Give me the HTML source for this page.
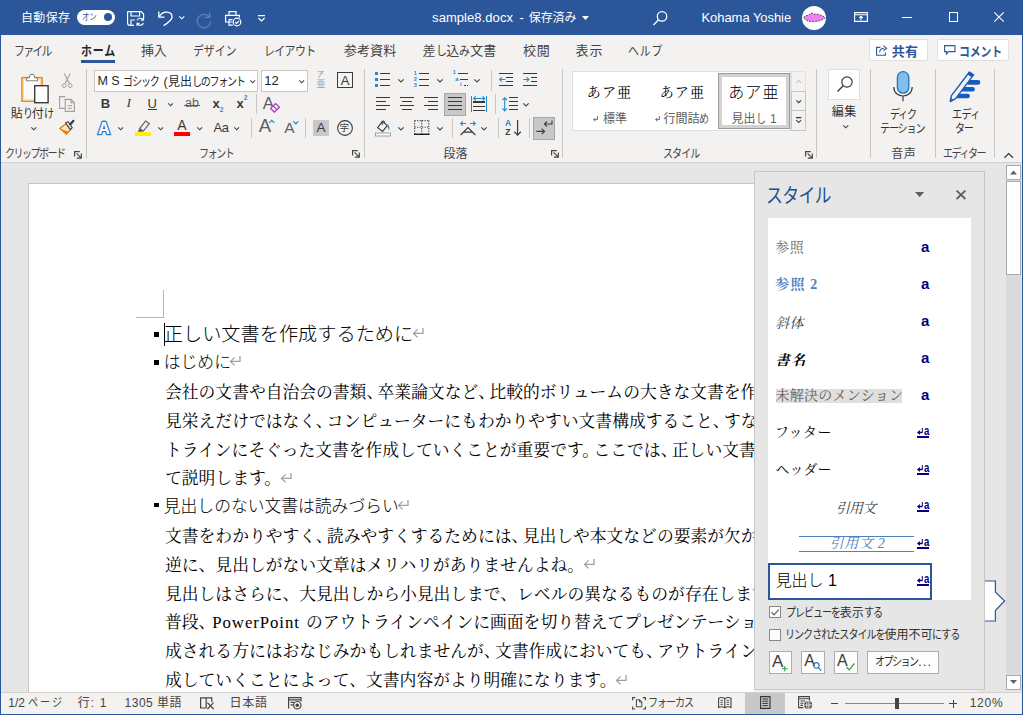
<!DOCTYPE html>
<html lang="ja">
<head>
<meta charset="utf-8">
<title>sample8.docx - Word</title>
<style>
*{box-sizing:border-box;margin:0;padding:0}
html,body{width:1023px;height:715px;overflow:hidden;background:#e6e6e6}
body{position:relative;font-family:"Liberation Sans","Noto Sans CJK JP",sans-serif;font-size:12px;color:#444}
.abs{position:absolute}
.t{position:absolute;white-space:pre;line-height:1;color:#444}
svg{position:absolute;overflow:visible}
.clip{position:absolute;overflow:hidden}
.bd{position:absolute;left:165px;height:28.8px;line-height:28.8px;white-space:pre;color:#000;font-size:16.8px;font-family:'Liberation Serif','Noto Serif CJK JP','Noto Serif CJK SC',serif}
.hd{position:absolute;left:163.8px;height:28.8px;line-height:28.8px;white-space:pre;color:#000;font-weight:300;font-family:'Liberation Sans','Noto Sans CJK JP','IPAGothic',sans-serif}
.lat{display:inline-block;width:93.7px;letter-spacing:0.92px}
.pmb{margin-left:-2.6px;margin-bottom:5px}
.pm{position:static;display:inline-block;vertical-align:middle;margin-left:-0.5px;margin-bottom:5px}
.k{display:inline-block;transform-origin:0 50%}
</style>
</head>
<body>
<div class="abs" style="left:0px;top:0px;width:1023px;height:35px;background:#2b579a;"></div>
<div class="abs" style="left:1px;top:35px;width:1021px;height:127px;background:#f3f2f1;"></div>
<div class="abs" style="left:1px;top:162px;width:1021px;height:1px;background:#d0d0d0;"></div>
<div class="abs" style="left:1px;top:163px;width:1021px;height:529px;background:#e6e6e6;"></div>
<div class="abs" style="left:0px;top:35px;width:1px;height:680px;background:#2b579a;"></div>
<div class="abs" style="left:1022px;top:35px;width:1px;height:680px;background:#2b579a;"></div>
<div class="abs" style="left:0px;top:714px;width:1023px;height:1px;background:#2b579a;"></div>
<div class="abs" style="left:28px;top:183px;width:760px;height:520px;background:#fff;border:1px solid #c6c6c6;"></div>
<div class="abs" style="left:163px;top:290px;width:1px;height:28px;background:#b5b5b5;"></div>
<div class="abs" style="left:136px;top:317px;width:28px;height:1px;background:#b5b5b5;"></div>
<div class="clip" style="left:29px;top:184px;width:725px;height:508px">
<div class="abs" style="left:-29px;top:-184px;width:1023px;height:715px">
<div class="abs" style="left:154.2px;top:331.8px;width:4.8px;height:4.8px;background:#000;"></div>
<div class="hd" style="top:320.8px;font-size:19.2px">正しい文書を作成するために<svg class="pm" width="11" height="10" viewBox="0 0 11 10"><path d="M10 0 V5.4 H0.6 M4.6 1.4 L0.5 5.4 L4.6 9.4" fill="none" stroke="#a0a0a0" stroke-width="1.3"/></svg></div>
<div class="abs" style="left:154.2px;top:360px;width:4.8px;height:4.8px;background:#000;"></div>
<div class="hd" style="top:348.8px;font-size:16.8px">はじめに<svg class="pm" width="11" height="10" viewBox="0 0 11 10"><path d="M10 0 V5.4 H0.6 M4.6 1.4 L0.5 5.4 L4.6 9.4" fill="none" stroke="#a0a0a0" stroke-width="1.3"/></svg></div>
<div class="bd" style="top:379px">会社の文書や自治会の書類<span style="margin-right:-5.65px">、</span>卒業論文など<span style="margin-right:-5.65px">、</span>比較的ボリュームの大きな文書を作成する場合は<span style="margin-right:-5.65px">、</span></div>
<div class="bd" style="top:407.8px">見栄えだけではなく<span style="margin-right:-5.65px">、</span>コンピューターにもわかりやすい文書構成すること<span style="margin-right:-5.65px">、</span>すなわちアウ</div>
<div class="bd" style="top:436.6px">トラインにそぐった文書を作成していくことが重要です<span style="margin-right:-5.65px">。</span>ここでは<span style="margin-right:-5.65px">、</span>正しい文書構造につい</div>
<div class="bd" style="top:465.4px">て説明します。<svg class="pm pmb" width="11" height="10" viewBox="0 0 11 10"><path d="M10 0 V5.4 H0.6 M4.6 1.4 L0.5 5.4 L4.6 9.4" fill="none" stroke="#a0a0a0" stroke-width="1.3"/></svg></div>
<div class="abs" style="left:154.2px;top:502.7px;width:4.8px;height:4.8px;background:#000;"></div>
<div class="hd" style="top:492.8px;font-size:16.8px">見出しのない文書は読みづらい<svg class="pm" width="11" height="10" viewBox="0 0 11 10"><path d="M10 0 V5.4 H0.6 M4.6 1.4 L0.5 5.4 L4.6 9.4" fill="none" stroke="#a0a0a0" stroke-width="1.3"/></svg></div>
<div class="bd" style="top:523px">文書をわかりやすく<span style="margin-right:-5.65px">、</span>読みやすくするためには<span style="margin-right:-5.65px">、</span>見出しや本文などの要素が欠かせません<span style="margin-right:-5.65px">。</span></div>
<div class="bd" style="top:551.8px">逆に、見出しがない文章はメリハリがありませんよね。<svg class="pm pmb" width="11" height="10" viewBox="0 0 11 10"><path d="M10 0 V5.4 H0.6 M4.6 1.4 L0.5 5.4 L4.6 9.4" fill="none" stroke="#a0a0a0" stroke-width="1.3"/></svg></div>
<div class="bd" style="top:580.6px">見出しはさらに、大見出しから小見出しまで、レベルの異なるものが存在します。</div>
<div class="bd" style="top:609.4px">普段<span style="margin-right:-3.1px">、</span><span class="lat">PowerPoint </span>のアウトラインペインに画面を切り替えてプレゼンテーションを作</div>
<div class="bd" style="top:638.2px">成される方にはおなじみかもしれませんが<span style="margin-right:-5.65px">、</span>文書作成においても<span style="margin-right:-5.65px">、</span>アウトラインを作</div>
<div class="bd" style="top:667px">成していくことによって、文書内容がより明確になります。<svg class="pm pmb" width="11" height="10" viewBox="0 0 11 10"><path d="M10 0 V5.4 H0.6 M4.6 1.4 L0.5 5.4 L4.6 9.4" fill="none" stroke="#a0a0a0" stroke-width="1.3"/></svg></div>
</div></div>
<div class="abs" style="left:164.4px;top:323px;width:1px;height:22.6px;background:#000;"></div>
<div class="t" id="t1" style="left:21px;top:11.5px;font-size:12px;color:#fff;letter-spacing:0.33px;">自動保存</div>
<div class="abs" style="left:77px;top:10px;width:38px;height:14.5px;background:#fff;border-radius:7.5px;"></div>
<div class="t" id="t2" style="left:82.25px;top:12.8px;font-size:9px;color:#2b579a;"><span class="k" style="margin-right:-2.78px;transform:scaleX(0.84);letter-spacing:-0.3px;">オン</span></div>
<div class="abs" style="left:104px;top:13.1px;width:8px;height:8px;background:#2b579a;border-radius:4px;"></div>
<svg style="left:127px;top:11px" width="18" height="15" viewBox="0 0 18 15"><path d="M0.6 0.6 H14.2 L16.6 3 V8 M0.6 0.6 V12 Q0.6 14.4 3 14.4 H7 M4 0.6 V5 H12.6 V0.6 M4 14 V9 H8" fill="none" stroke="#fff" stroke-width="1.2"/><path d="M10 9.4 A3.4 3.4 0 0 1 16.2 9 M16.4 6.6 V9.2 H13.8 M16.4 12 A3.4 3.4 0 0 1 10.2 12.6 M10 15 V12.4 H12.6" fill="none" stroke="#fff" stroke-width="1.1"/></svg>
<svg style="left:158px;top:11px" width="15" height="15" viewBox="0 0 15 15"><path d="M0.8 0.6 V6.2 H6.4 M1 6 C3 2.4 6.4 0.9 9.4 1.2 C12.6 1.6 14.2 4 14 6.4 C13.8 9.4 10.4 11.6 5.6 14.6" fill="none" stroke="#fff" stroke-width="1.3"/></svg>
<svg style="left:179px;top:16px" width="5.6" height="3.8" viewBox="0 0 5.6 3.8"><path d="M0.3 0.3 L2.8 2.8 L5.3 0.3" fill="none" stroke="#fff" stroke-width="1.1"/></svg>
<svg style="left:196px;top:11.6px" width="16" height="15" viewBox="0 0 16 15"><path d="M13.6 0.4 V5.4 H8.6 M13.2 5 A6.7 6.7 0 1 0 14.6 9.6" fill="none" stroke="#5b7fb8" stroke-width="1.3"/></svg>
<svg style="left:225px;top:11px" width="17" height="15" viewBox="0 0 17 15"><path d="M4 4.4 V0.6 H11 V4.4 M7.4 11 H0.6 V4.4 H14.4 V6.6 M4 8.6 H7.6 M4 8.6 V14.2 H7.8" fill="none" stroke="#fff" stroke-width="1.2"/><circle cx="12" cy="11" r="3.8" fill="none" stroke="#fff" stroke-width="1.2"/><path d="M10.2 11 L11.6 12.4 L14 9.8" fill="none" stroke="#fff" stroke-width="1.1"/></svg>
<svg style="left:258px;top:14.6px" width="7" height="6.4" viewBox="0 0 7 6.4"><path d="M0 0.6 H7 M0.4 3 L3.5 6 L6.6 3" fill="none" stroke="#fff" stroke-width="1.2"/></svg>
<div class="t" id="t3" style="left:432.1px;top:11px;font-size:13px;color:#fff;letter-spacing:0.06px;">sample8.docx</div>
<div class="t" id="t4" style="left:519.5px;top:11px;font-size:13px;color:#fff;">-</div>
<div class="t" id="t5" style="left:528.75px;top:11.6px;font-size:12px;color:#fff;letter-spacing:-0.07px;">保存済み</div>
<svg style="left:581.5px;top:15.8px" width="7" height="4" viewBox="0 0 7 4"><path d="M0 0 H7 L3.5 4 Z" fill="#fff"/></svg>
<svg style="left:653px;top:11px" width="14.5" height="14.5" viewBox="0 0 14.5 14.5"><circle cx="9" cy="5.4" r="4.7" fill="none" stroke="#fff" stroke-width="1.3"/><path d="M5.6 8.8 L0.5 14" stroke="#fff" stroke-width="1.3"/></svg>
<div class="t" id="t6" style="left:701.5px;top:11px;font-size:13px;color:#fff;letter-spacing:-0.06px;">Kohama Yoshie</div>
<div class="abs" style="left:802px;top:6px;width:24px;height:24px;background:#fff;border-radius:12px;"></div>
<svg style="left:803px;top:12.4px" width="23" height="11" viewBox="0 0 23 11"><path d="M0.6 5.6 C2 3.4 4.4 3.6 6 3 C7 0.8 9.4 0.8 10.4 2.2 C13.6 1.6 18.4 2.6 22.2 5.8 C19 8.4 15 9.6 10.6 9.4 C6.6 9.8 2.4 8.8 0.6 5.6 Z" fill="#ee82ee" stroke="#111" stroke-width="0.7" stroke-dasharray="1.8 1.2"/></svg>
<svg style="left:854px;top:12px" width="14" height="10" viewBox="0 0 14 10"><path d="M0.6 0.6 H13.4 V9.4 H0.6 Z M0.6 2.8 H13.4" fill="none" stroke="#fff" stroke-width="1.1"/><path d="M7 8.2 V4.4 M5.2 6 L7 4.2 L8.8 6" fill="none" stroke="#fff" stroke-width="1.1"/></svg>
<div class="abs" style="left:902px;top:16.6px;width:10px;height:1.1px;background:#fff;"></div>
<div class="abs" style="left:948.6px;top:12.4px;width:9.8px;height:9.8px;border:1.1px solid #fff;"></div>
<svg style="left:994px;top:12px" width="10" height="10" viewBox="0 0 10 10"><path d="M0.3 0.3 L9.7 9.7 M9.7 0.3 L0.3 9.7" stroke="#fff" stroke-width="1.1"/></svg>
<div class="t" id="t7" style="left:13.5px;top:43.5px;font-size:13px;"><span class="k" style="margin-right:-6.99px;transform:scaleX(0.84);letter-spacing:-2.08px;">ファイル</span></div>
<div class="t" id="t8" style="left:81px;top:43.5px;font-size:13px;color:#262626;font-weight:700;"><span class="k" style="margin-right:-6.74px;transform:scaleX(0.84);letter-spacing:1.04px;">ホーム</span></div>
<div class="abs" style="left:81px;top:60px;width:34px;height:3px;background:#2b579a;"></div>
<div class="t" id="t9" style="left:140.95px;top:43.5px;font-size:13px;letter-spacing:-0.25px;">挿入</div>
<div class="t" id="t10" style="left:193.4px;top:43.5px;font-size:13px;"><span class="k" style="margin-right:-8.26px;transform:scaleX(0.84);letter-spacing:-0.1px;">デザイン</span></div>
<div class="t" id="t11" style="left:263.5px;top:43.5px;font-size:13px;"><span class="k" style="margin-right:-9.81px;transform:scaleX(0.84);letter-spacing:-0.74px;">レイアウト</span></div>
<div class="t" id="t12" style="left:343.75px;top:43.5px;font-size:13px;letter-spacing:0.18px;">参考資料</div>
<div class="t" id="t13" style="left:422.5px;top:43.5px;font-size:13px;">差<span class="k" style="margin-right:-2.06px;transform:scaleX(0.84);letter-spacing:-0.15px;">し</span>込<span class="k" style="margin-right:-2.06px;transform:scaleX(0.84);letter-spacing:-0.15px;">み</span>文書</div>
<div class="t" id="t14" style="left:522.9px;top:43.5px;font-size:13px;letter-spacing:0.8px;">校閲</div>
<div class="t" id="t15" style="left:575.5px;top:43.5px;font-size:13px;letter-spacing:1.05px;">表示</div>
<div class="t" id="t16" style="left:627.65px;top:43.5px;font-size:13px;"><span class="k" style="margin-right:-6.68px;transform:scaleX(0.84);letter-spacing:0.92px;">ヘルプ</span></div>
<div class="abs" style="left:868.5px;top:38.6px;width:59px;height:22.6px;background:#fff;border:1px solid #e1dfdd;border-radius:2px;"></div>
<svg style="left:875.6px;top:45px" width="11.6" height="10.8" viewBox="0 0 11.6 10.8"><path d="M4.4 2.4 H0.6 V10.2 H9.4 V7.4" fill="none" stroke="#2b579a" stroke-width="1.1"/><path d="M3.6 7.4 C3.8 4.6 5.6 3.2 8 3.2 M7.4 0.6 L10.6 3.2 L7.4 5.8" fill="none" stroke="#2b579a" stroke-width="1.1"/></svg>
<div class="t" id="t17" style="left:891.8px;top:44.5px;font-size:13px;color:#2b579a;font-weight:700;letter-spacing:0.25px;">共有</div>
<div class="abs" style="left:936.6px;top:38.6px;width:72.7px;height:22.6px;background:#fff;border:1px solid #e1dfdd;border-radius:2px;"></div>
<svg style="left:944.4px;top:45.4px" width="11.6" height="9.6" viewBox="0 0 11.6 9.6"><path d="M0.6 0.6 H11 V6.6 H4.6 L2.4 9 V6.6 H0.6 Z" fill="none" stroke="#2b579a" stroke-width="1.1"/></svg>
<div class="t" id="t18" style="left:958.5px;top:44.5px;font-size:13px;color:#2b579a;font-weight:700;"><span class="k" style="margin-right:-8.18px;transform:scaleX(0.84);letter-spacing:-0.22px;">コメント</span></div>
<svg style="left:20.5px;top:72.6px" width="28" height="30.5" viewBox="0 0 28 30.5"><rect x="1" y="4.6" width="20" height="23.6" fill="#fbfaf8" stroke="#e48a00" stroke-width="1.5"/><rect x="2.4" y="6" width="17.2" height="20.8" fill="none" stroke="#fbdca8" stroke-width="1.2"/><path d="M5.4 7.8 V4.6 H8.4 C8.4 0.2 13.6 0.2 13.6 4.6 H16.6 V7.8 Z" fill="#fafafa" stroke="#8a8886" stroke-width="1.1"/><rect x="13.7" y="12.7" width="13.4" height="17" fill="#fff" stroke="#3b3a39" stroke-width="1.4"/></svg>
<div class="t" id="t19" style="left:10.7px;top:108.2px;font-size:12px;color:#323130;">貼<span class="k" style="margin-right:-1.72px;transform:scaleX(0.84);letter-spacing:-1.25px;">り</span>付<span class="k" style="margin-right:-1.72px;transform:scaleX(0.84);letter-spacing:-1.25px;">け</span></div>
<svg style="left:30.8px;top:127.2px" width="5.6" height="3.8" viewBox="0 0 5.6 3.8"><path d="M0.3 0.3 L2.8 2.8 L5.3 0.3" fill="none" stroke="#444" stroke-width="1.1"/></svg>
<svg style="left:62px;top:72.6px" width="10.4" height="15.2" viewBox="0 0 10.4 15.2"><path d="M2.2 0.4 L7.4 10.6 M8.2 0.4 L3 10.6" fill="none" stroke="#a19f9d" stroke-width="1.1"/><circle cx="2.2" cy="12.6" r="1.9" fill="none" stroke="#a19f9d" stroke-width="1"/><circle cx="8.2" cy="12.6" r="1.9" fill="none" stroke="#a19f9d" stroke-width="1"/></svg>
<svg style="left:59px;top:96px" width="16" height="16" viewBox="0 0 16 16"><path d="M6 12.4 H0.6 V0.6 H6.2" fill="none" stroke="#a19f9d" stroke-width="1.1"/><path d="M6.2 3.4 H12 L15.4 6.8 V15.4 H6.2 Z M12 3.4 V6.8 H15.4" fill="#f3f2f1" stroke="#a19f9d" stroke-width="1.1"/><path d="M8.6 9.6 H13 M8.6 12.2 H13" stroke="#a19f9d" stroke-width="1"/></svg>
<svg style="left:59.4px;top:120px" width="16" height="15" viewBox="0 0 16 15"><path d="M0.8 8.4 L7.2 3.6 L11.6 9.8 L7.4 14.2 Z" fill="#fbe3c0" stroke="#e07800" stroke-width="1.3"/><path d="M1.4 8.8 L7.6 14 L9.6 11.8 Z" fill="#e8820c"/><path d="M6.6 3 L9.2 1.6 L13.2 7.6 L11.4 9.6 Z" fill="#f3f2f1" stroke="#3b3a39" stroke-width="1.1"/><path d="M11.2 4.4 L14.4 0.8" stroke="#3b3a39" stroke-width="2.2" stroke-linecap="round"/></svg>
<div class="t" id="t20" style="left:5.3px;top:147.6px;font-size:12px;"><span class="k" style="margin-right:-11.32px;transform:scaleX(0.84);letter-spacing:-1.89px;">クリップボード</span></div>
<svg style="left:74px;top:150.5px" width="8" height="7.5" viewBox="0 0 8 7.5"><path d="M0.6 5.6 V0.6 H5.8" fill="none" stroke="#484644" stroke-width="1.2"/><path d="M2.6 2.4 L7 6.8 M7.3 2.6 V7.1 H2.8" fill="none" stroke="#484644" stroke-width="1.2"/></svg>
<div class="abs" style="left:85.5px;top:69.3px;width:1px;height:88.4px;background:#c8c6c4;"></div>
<div class="abs" style="left:94.4px;top:69.5px;width:164px;height:22px;background:#fff;border:1px solid #c8c6c4;"></div>
<div class="t" id="t21" style="left:97.6px;top:75.35px;font-size:12.5px;color:#262626;">M</div>
<div class="t" id="t22" style="left:111.15px;top:75.35px;font-size:12.5px;color:#262626;">S</div>
<div class="t" id="t23" style="left:123.2px;top:75.8px;font-size:12px;color:#262626;"><span class="k" style="margin-right:-6.82px;transform:scaleX(0.84);letter-spacing:-1.35px;">ゴシック</span></div>
<div class="t" id="t24" style="left:163.55px;top:75.55px;font-size:12.5px;color:#262626;">(</div>
<div class="t" id="t25" style="left:167.9px;top:75.8px;font-size:12px;color:#262626;">見出<span class="k" style="margin-right:-10px;transform:scaleX(0.84);letter-spacing:-1.58px;">しのフォント</span></div>
<svg style="left:250px;top:79.8px" width="5.4" height="3.8" viewBox="0 0 5.4 3.8"><path d="M0.3 0.3 L2.7 2.8 L5.1 0.3" fill="none" stroke="#444" stroke-width="1.1"/></svg>
<div class="abs" style="left:261.4px;top:69.5px;width:46.2px;height:22px;background:#fff;border:1px solid #c8c6c4;"></div>
<div class="t" id="t26" style="left:264.2px;top:74.4px;font-size:13px;color:#262626;">12</div>
<svg style="left:298.6px;top:79.8px" width="5.4" height="3.8" viewBox="0 0 5.4 3.8"><path d="M0.3 0.3 L2.7 2.8 L5.1 0.3" fill="none" stroke="#444" stroke-width="1.1"/></svg>
<div class="t" id="t27" style="left:316.85px;top:71.3px;font-size:8px;color:#8a8886;"><span class="k" style="margin-right:-1.28px;transform:scaleX(0.84);">ア</span></div>
<div class="t" id="t28" style="left:316.5px;top:79.5px;font-size:9px;color:#a19f9d;">亜</div>
<div class="abs" style="left:337px;top:72px;width:16px;height:16px;border:1.2px solid #3b3a39;"></div>
<div class="t" id="t29" style="left:340.7px;top:73.7px;font-size:13px;color:#3b3a39;">A</div>
<div class="t" id="t30" style="left:100.75px;top:96.7px;font-size:13px;color:#3b3a39;font-weight:700;">B</div>
<div class="t" id="t31" style="left:126.6px;top:96.45px;font-size:13.5px;color:#3b3a39;font-family:'Liberation Serif',serif;font-style:italic;">I</div>
<div class="t" id="t32" style="left:147.6px;top:96.7px;font-size:13px;color:#3b3a39;">U</div>
<div class="abs" style="left:148.2px;top:109px;width:9.2px;height:1px;background:#3b3a39;"></div>
<svg style="left:167.9px;top:103px" width="5.2" height="3.8" viewBox="0 0 5.2 3.8"><path d="M0.3 0.3 L2.6 2.8 L4.9 0.3" fill="none" stroke="#444" stroke-width="1.1"/></svg>
<div class="t" id="t33" style="left:185.1px;top:97.35px;font-size:12.5px;color:#605e5c;">ab</div>
<div class="abs" style="left:184.3px;top:104.6px;width:15.7px;height:1px;background:#605e5c;"></div>
<div class="t" id="t34" style="left:212.55px;top:96.9px;font-size:13px;color:#3b3a39;font-weight:700;">x</div>
<div class="t" id="t35" style="left:219.75px;top:106.55px;font-size:6.5px;color:#1e8bcd;font-weight:700;">2</div>
<div class="t" id="t36" style="left:236.45px;top:96.9px;font-size:13px;color:#3b3a39;font-weight:700;">x</div>
<div class="t" id="t37" style="left:243.75px;top:95.05px;font-size:6.5px;color:#1e8bcd;font-weight:700;">2</div>
<div class="abs" style="left:255.5px;top:94px;width:1px;height:20px;background:#c8c6c4;"></div>
<div class="t" id="t38" style="left:262.8px;top:95.1px;font-size:17px;color:#605e5c;">A</div>
<svg style="left:269.5px;top:102.5px" width="10" height="9.5" viewBox="0 0 10 9.5"><path d="M0.6 5.4 L5.6 0.6 L9.4 4.2 L4.4 9 Z M3.1 3 L6.9 6.6" fill="#fff" stroke="#a63fb5" stroke-width="1.3"/></svg>
<div class="t" id="t39" style="left:98.1px;top:119.55px;font-size:16.5px;color:#fff;font-weight:700;-webkit-text-stroke:2.6px #2b7cd3;paint-order:stroke fill;">A</div>
<svg style="left:117.8px;top:126.5px" width="5.4" height="3.8" viewBox="0 0 5.4 3.8"><path d="M0.3 0.3 L2.7 2.8 L5.1 0.3" fill="none" stroke="#444" stroke-width="1.1"/></svg>
<svg style="left:135px;top:120px" width="16" height="16" viewBox="0 0 16 16"><path d="M4.6 8.6 L10.6 1 L14.2 3.6 L8.4 11 Z" fill="none" stroke="#605e5c" stroke-width="1.2"/><path d="M4.4 8.8 L8.2 11.4 L5.6 12 L2.6 11.4 Z" fill="#605e5c"/><rect x="0" y="12.2" width="16" height="3.8" fill="#ffef00"/></svg>
<svg style="left:157.6px;top:126.5px" width="5.4" height="3.8" viewBox="0 0 5.4 3.8"><path d="M0.3 0.3 L2.7 2.8 L5.1 0.3" fill="none" stroke="#444" stroke-width="1.1"/></svg>
<div class="t" id="t40" style="left:177.2px;top:118.4px;font-size:14px;color:#3b3a39;">A</div>
<div class="abs" style="left:174px;top:132.2px;width:16px;height:3.8px;background:#f00;"></div>
<svg style="left:196.8px;top:126.5px" width="5.4" height="3.8" viewBox="0 0 5.4 3.8"><path d="M0.3 0.3 L2.7 2.8 L5.1 0.3" fill="none" stroke="#444" stroke-width="1.1"/></svg>
<div class="t" id="t41" style="left:213.4px;top:121.1px;font-size:13px;color:#3b3a39;letter-spacing:-0.2px;">Aa</div>
<svg style="left:234px;top:126.5px" width="5.4" height="3.8" viewBox="0 0 5.4 3.8"><path d="M0.3 0.3 L2.7 2.8 L5.1 0.3" fill="none" stroke="#444" stroke-width="1.1"/></svg>
<div class="abs" style="left:250.5px;top:118px;width:1px;height:20px;background:#c8c6c4;"></div>
<div class="t" id="t42" style="left:258.8px;top:117.25px;font-size:18.5px;color:#605e5c;">A</div>
<svg style="left:269px;top:120.2px" width="5.6" height="3" viewBox="0 0 5.6 3"><path d="M0.3 2.9 L2.8 0.4 L5.3 2.9" fill="none" stroke="#1e8bcd" stroke-width="1.2"/></svg>
<div class="t" id="t43" style="left:284.2px;top:119.55px;font-size:15.5px;color:#605e5c;">A</div>
<svg style="left:292.6px;top:121px" width="5.6" height="3" viewBox="0 0 5.6 3"><path d="M0.3 0.3 L2.8 2.8 L5.3 0.3" fill="none" stroke="#1e8bcd" stroke-width="1.2"/></svg>
<div class="abs" style="left:305.4px;top:118px;width:1px;height:20px;background:#c8c6c4;"></div>
<div class="abs" style="left:313px;top:120px;width:16px;height:16px;background:#c8c8c8;"></div>
<div class="t" id="t44" style="left:316.6px;top:121.45px;font-size:13.5px;color:#3b3a39;">A</div>
<svg style="left:337px;top:120px" width="16" height="16" viewBox="0 0 16 16"><circle cx="8" cy="8" r="7.4" fill="none" stroke="#3b3a39" stroke-width="1.1"/></svg>
<div class="t" id="t45" style="left:339.45px;top:123.2px;font-size:9.6px;color:#3b3a39;">字</div>
<div class="t" id="t46" style="left:198.8px;top:147.9px;font-size:12px;"><span class="k" style="margin-right:-6.55px;transform:scaleX(0.84);letter-spacing:-1.77px;">フォント</span></div>
<svg style="left:352px;top:150.2px" width="8" height="7.5" viewBox="0 0 8 7.5"><path d="M0.6 5.6 V0.6 H5.8" fill="none" stroke="#484644" stroke-width="1.2"/><path d="M2.6 2.4 L7 6.8 M7.3 2.6 V7.1 H2.8" fill="none" stroke="#484644" stroke-width="1.2"/></svg>
<div class="abs" style="left:363.6px;top:69.3px;width:1px;height:88.4px;background:#c8c6c4;"></div>
<div class="abs" style="left:375px;top:72px;width:3px;height:3px;background:#1e8bcd;"></div>
<div class="abs" style="left:380px;top:72.95px;width:10px;height:1.1px;background:#3b3a39;"></div>
<div class="abs" style="left:375px;top:78px;width:3px;height:3px;background:#1e8bcd;"></div>
<div class="abs" style="left:380px;top:78.95px;width:10px;height:1.1px;background:#3b3a39;"></div>
<div class="abs" style="left:375px;top:84px;width:3px;height:3px;background:#1e8bcd;"></div>
<div class="abs" style="left:380px;top:84.95px;width:10px;height:1.1px;background:#3b3a39;"></div>
<svg style="left:397.5px;top:79px" width="6" height="4" viewBox="0 0 6 4"><path d="M0.3 0.3 L3 3 L5.7 0.3" fill="none" stroke="#444" stroke-width="1.1"/></svg>
<div class="t" id="t47" style="left:413.75px;top:70.75px;font-size:5.5px;color:#1e8bcd;font-weight:700;">1</div>
<div class="abs" style="left:419px;top:72.95px;width:10px;height:1.1px;background:#3b3a39;"></div>
<div class="t" id="t48" style="left:413.75px;top:76.75px;font-size:5.5px;color:#1e8bcd;font-weight:700;">2</div>
<div class="abs" style="left:419px;top:78.95px;width:10px;height:1.1px;background:#3b3a39;"></div>
<div class="t" id="t49" style="left:413.75px;top:82.75px;font-size:5.5px;color:#1e8bcd;font-weight:700;">3</div>
<div class="abs" style="left:419px;top:84.95px;width:10px;height:1.1px;background:#3b3a39;"></div>
<svg style="left:436.5px;top:79px" width="6" height="4" viewBox="0 0 6 4"><path d="M0.3 0.3 L3 3 L5.7 0.3" fill="none" stroke="#444" stroke-width="1.1"/></svg>
<div class="t" id="t50" style="left:452.75px;top:70.25px;font-size:5.5px;color:#1e8bcd;font-weight:700;">1</div>
<div class="abs" style="left:458.3px;top:72.95px;width:9.7px;height:1.1px;background:#3b3a39;"></div>
<div class="t" id="t51" style="left:455.35px;top:76.3px;font-size:6px;color:#1e8bcd;font-weight:700;">a</div>
<div class="abs" style="left:460.4px;top:78.95px;width:7.6px;height:1.1px;background:#3b3a39;"></div>
<div class="t" id="t52" style="left:460.1px;top:82.25px;font-size:5.5px;color:#1e8bcd;font-weight:700;">i</div>
<div class="abs" style="left:463.5px;top:84.95px;width:2px;height:1.1px;background:#3b3a39;"></div>
<div class="abs" style="left:466.5px;top:84.95px;width:1.5px;height:1.1px;background:#3b3a39;"></div>
<svg style="left:473.7px;top:79px" width="6" height="4" viewBox="0 0 6 4"><path d="M0.3 0.3 L3 3 L5.7 0.3" fill="none" stroke="#444" stroke-width="1.1"/></svg>
<div class="abs" style="left:490.5px;top:70px;width:1px;height:20.6px;background:#c8c6c4;"></div>
<div class="abs" style="left:499px;top:72.65px;width:14px;height:1.1px;background:#3b3a39;"></div>
<div class="abs" style="left:499px;top:85.25px;width:14px;height:1.1px;background:#3b3a39;"></div>
<div class="abs" style="left:506.4px;top:76.85px;width:6.6px;height:1.1px;background:#3b3a39;"></div>
<div class="abs" style="left:506.4px;top:81.05px;width:6.6px;height:1.1px;background:#3b3a39;"></div>
<svg style="left:499px;top:77px" width="6.6" height="5" viewBox="0 0 6.6 5"><path d="M6.4 2.5 H0.8 M2.8 0.3 L0.6 2.5 L2.8 4.7" fill="none" stroke="#1e8bcd" stroke-width="1.1"/></svg>
<div class="abs" style="left:523px;top:72.65px;width:14.2px;height:1.1px;background:#3b3a39;"></div>
<div class="abs" style="left:523px;top:85.25px;width:14.2px;height:1.1px;background:#3b3a39;"></div>
<div class="abs" style="left:531px;top:76.85px;width:6.2px;height:1.1px;background:#3b3a39;"></div>
<div class="abs" style="left:531px;top:81.05px;width:6.2px;height:1.1px;background:#3b3a39;"></div>
<svg style="left:522.6px;top:77px" width="6.6" height="5" viewBox="0 0 6.6 5"><path d="M0.2 2.5 H5.8 M3.8 0.3 L6 2.5 L3.8 4.7" fill="none" stroke="#1e8bcd" stroke-width="1.1"/></svg>
<div class="abs" style="left:376px;top:96.85px;width:14px;height:1.1px;background:#3b3a39;"></div>
<div class="abs" style="left:400px;top:96.85px;width:14px;height:1.1px;background:#3b3a39;"></div>
<div class="abs" style="left:424px;top:96.85px;width:14px;height:1.1px;background:#3b3a39;"></div>
<div class="abs" style="left:376px;top:100.95px;width:10px;height:1.1px;background:#3b3a39;"></div>
<div class="abs" style="left:402px;top:100.95px;width:10px;height:1.1px;background:#3b3a39;"></div>
<div class="abs" style="left:428px;top:100.95px;width:10px;height:1.1px;background:#3b3a39;"></div>
<div class="abs" style="left:376px;top:105.05px;width:14px;height:1.1px;background:#3b3a39;"></div>
<div class="abs" style="left:400px;top:105.05px;width:14px;height:1.1px;background:#3b3a39;"></div>
<div class="abs" style="left:424px;top:105.05px;width:14px;height:1.1px;background:#3b3a39;"></div>
<div class="abs" style="left:376px;top:109.05px;width:10px;height:1.1px;background:#3b3a39;"></div>
<div class="abs" style="left:402px;top:109.05px;width:10px;height:1.1px;background:#3b3a39;"></div>
<div class="abs" style="left:428px;top:109.05px;width:10px;height:1.1px;background:#3b3a39;"></div>
<div class="abs" style="left:444px;top:93.3px;width:21.8px;height:22.3px;background:#c8c8c8;border:1px solid #a6a6a6;"></div>
<div class="abs" style="left:448.2px;top:96.85px;width:13.8px;height:1.1px;background:#3b3a39;"></div>
<div class="abs" style="left:448.2px;top:100.95px;width:13.8px;height:1.1px;background:#3b3a39;"></div>
<div class="abs" style="left:448.2px;top:105.05px;width:13.8px;height:1.1px;background:#3b3a39;"></div>
<div class="abs" style="left:448.2px;top:109.05px;width:13.8px;height:1.1px;background:#3b3a39;"></div>
<div class="abs" style="left:471px;top:96px;width:1.2px;height:16px;background:#1e8bcd;"></div>
<div class="abs" style="left:486px;top:96px;width:1.2px;height:16px;background:#1e8bcd;"></div>
<svg style="left:473px;top:96px" width="12.4" height="5" viewBox="0 0 12.4 5"><path d="M0.6 2.5 H11.8 M2.8 0.3 L0.6 2.5 L2.8 4.7 M9.6 0.3 L11.8 2.5 L9.6 4.7" fill="none" stroke="#1e8bcd" stroke-width="1.1"/></svg>
<div class="abs" style="left:473.4px;top:101.45px;width:11.6px;height:1.1px;background:#3b3a39;"></div>
<div class="abs" style="left:473.4px;top:105.55px;width:11.6px;height:1.1px;background:#3b3a39;"></div>
<div class="abs" style="left:473.4px;top:109.65px;width:11.6px;height:1.1px;background:#3b3a39;"></div>
<div class="abs" style="left:494.5px;top:94px;width:1px;height:20.3px;background:#c8c6c4;"></div>
<svg style="left:501.8px;top:96.6px" width="5.4" height="14.6" viewBox="0 0 5.4 14.6"><path d="M2.7 0.8 V13.8 M0.4 3.2 L2.7 0.7 L5 3.2 M0.4 11.4 L2.7 13.9 L5 11.4" fill="none" stroke="#1e8bcd" stroke-width="1.1"/></svg>
<div class="abs" style="left:509.2px;top:97.05px;width:9px;height:1.1px;background:#3b3a39;"></div>
<div class="abs" style="left:509.2px;top:101.05px;width:9px;height:1.1px;background:#3b3a39;"></div>
<div class="abs" style="left:509.2px;top:105.05px;width:9px;height:1.1px;background:#3b3a39;"></div>
<div class="abs" style="left:509.2px;top:109.05px;width:9px;height:1.1px;background:#3b3a39;"></div>
<svg style="left:522.6px;top:103.2px" width="6" height="4" viewBox="0 0 6 4"><path d="M0.3 0.3 L3 3 L5.7 0.3" fill="none" stroke="#444" stroke-width="1.1"/></svg>
<svg style="left:375px;top:119.6px" width="16" height="16.4" viewBox="0 0 16 16.4"><path d="M7.2 1.6 L2.6 7.6 L7.6 11.4 L12.4 5.4 Z" fill="none" stroke="#3b3a39" stroke-width="1.1"/><path d="M7.2 5 V2 C7.2 0.4 9.4 0.4 9.4 2 V3.2" fill="none" stroke="#3b3a39" stroke-width="1"/><path d="M12.8 4.6 C14.6 6 14.8 8.6 14 10.8 C13.4 9 13 7 12 5.8 Z" fill="#1e8bcd"/><rect x="0.5" y="13" width="15" height="3" fill="#fff" stroke="#a19f9d" stroke-width="1"/></svg>
<svg style="left:397.5px;top:126.8px" width="6" height="4" viewBox="0 0 6 4"><path d="M0.3 0.3 L3 3 L5.7 0.3" fill="none" stroke="#444" stroke-width="1.1"/></svg>
<svg style="left:413.8px;top:120px" width="15.4" height="15" viewBox="0 0 15.4 15"><path d="M0.6 0.6 H14.8 M0.6 0.6 V14 M14.8 0.6 V14 M7.7 0.6 V14 M0.6 7.3 H14.8" fill="none" stroke="#3b3a39" stroke-width="1.1" stroke-dasharray="1.1 1.4"/><path d="M0 14.3 H15.4" stroke="#1a1a1a" stroke-width="1.4"/></svg>
<svg style="left:436.5px;top:126.8px" width="6" height="4" viewBox="0 0 6 4"><path d="M0.3 0.3 L3 3 L5.7 0.3" fill="none" stroke="#444" stroke-width="1.1"/></svg>
<div class="abs" style="left:452.4px;top:118px;width:1px;height:20.4px;background:#c8c6c4;"></div>
<svg style="left:460px;top:121.4px" width="16" height="5" viewBox="0 0 16 5"><path d="M0.6 2.5 H6 M2.8 0.3 L0.6 2.5 L2.8 4.7 M10 2.5 H15.4 M13.2 0.3 L15.4 2.5 L13.2 4.7" fill="none" stroke="#1e8bcd" stroke-width="1.1"/></svg>
<svg style="left:460px;top:126.6px" width="16" height="8.2" viewBox="0 0 16 8.2"><path d="M0.6 8 L8 0.6 L15.4 8 M3.6 5.2 H12.4" fill="none" stroke="#3b3a39" stroke-width="1.2"/></svg>
<svg style="left:480.7px;top:127px" width="6" height="4" viewBox="0 0 6 4"><path d="M0.3 0.3 L3 3 L5.7 0.3" fill="none" stroke="#444" stroke-width="1.1"/></svg>
<div class="abs" style="left:497.5px;top:118px;width:1px;height:20.4px;background:#c8c6c4;"></div>
<div class="t" id="t53" style="left:504.95px;top:119.35px;font-size:8.5px;color:#1e8bcd;font-weight:700;">A</div>
<div class="t" id="t54" style="left:505.15px;top:128.05px;font-size:8.5px;color:#3b3a39;font-weight:700;">Z</div>
<svg style="left:514.4px;top:120px" width="7.2" height="15.8" viewBox="0 0 7.2 15.8"><path d="M3.6 0 V15 M0.4 11.8 L3.6 15.1 L6.8 11.8" fill="none" stroke="#3b3a39" stroke-width="1.2"/></svg>
<div class="abs" style="left:528.5px;top:118px;width:1px;height:20.4px;background:#c8c6c4;"></div>
<div class="abs" style="left:533px;top:117.1px;width:21.8px;height:22.7px;background:#c8c8c8;border:1px solid #a6a6a6;"></div>
<svg style="left:536px;top:120.4px" width="17" height="15" viewBox="0 0 17 15"><path d="M0.4 11.4 H8.4 M5.6 8.6 L8.6 11.4 L5.6 14.2" fill="none" stroke="#3b3a39" stroke-width="1.1"/><path d="M16 0.4 V4 H8.6 M11 1.4 L8.4 4 L11 6.6" fill="none" stroke="#3b3a39" stroke-width="1.1"/></svg>
<div class="t" id="t55" style="left:443.5px;top:148.1px;font-size:12px;">段落</div>
<svg style="left:551px;top:150.2px" width="8" height="7.5" viewBox="0 0 8 7.5"><path d="M0.6 5.6 V0.6 H5.8" fill="none" stroke="#484644" stroke-width="1.2"/><path d="M2.6 2.4 L7 6.8 M7.3 2.6 V7.1 H2.8" fill="none" stroke="#484644" stroke-width="1.2"/></svg>
<div class="abs" style="left:562.4px;top:69.3px;width:1px;height:88.4px;background:#c8c6c4;"></div>
<div class="abs" style="left:572px;top:71px;width:218.6px;height:59.8px;background:#fff;border:1px solid #e1dfdd;"></div>
<div class="t" id="t56" style="left:586.85px;top:86px;font-size:14px;color:#000;font-family:'Liberation Serif','Noto Serif CJK JP','Noto Serif CJK SC',serif;letter-spacing:1.12px;">あア亜</div>
<svg style="left:593px;top:115.5px" width="5" height="5.6" viewBox="0 0 5 5.6"><path d="M4.4 0 V3.6 H0.8 M2.4 1.8 L0.6 3.6 L2.4 5.4" fill="none" stroke="#605e5c" stroke-width="0.9"/></svg>
<div class="t" id="t57" style="left:603px;top:112.6px;font-size:12px;color:#605e5c;">標準</div>
<div class="t" id="t58" style="left:659.85px;top:86px;font-size:14px;color:#000;font-family:'Liberation Serif','Noto Serif CJK JP','Noto Serif CJK SC',serif;letter-spacing:1.02px;">あア亜</div>
<svg style="left:654.6px;top:115.5px" width="5" height="5.6" viewBox="0 0 5 5.6"><path d="M4.4 0 V3.6 H0.8 M2.4 1.8 L0.6 3.6 L2.4 5.4" fill="none" stroke="#605e5c" stroke-width="0.9"/></svg>
<div class="t" id="t59" style="left:663.45px;top:112.6px;font-size:12px;color:#605e5c;">行間詰<span class="k" style="margin-right:-1.92px;transform:scaleX(0.84);">め</span></div>
<div class="abs" style="left:717.8px;top:73px;width:72.4px;height:55.8px;background:#fff;border:1px solid #9a9a9a;"></div>
<div class="abs" style="left:718.8px;top:74px;width:70.4px;height:53.8px;border:3px solid #d4d2d0;"></div>
<div class="t" id="t60" style="left:728.2px;top:84.8px;font-size:16px;color:#000;font-weight:300;font-family:'Liberation Sans','Noto Sans CJK JP','IPAGothic',sans-serif;letter-spacing:1.12px;">あア亜</div>
<div class="t" id="t61" style="left:731.5px;top:112.6px;font-size:12px;color:#605e5c;">見出<span class="k" style="margin-right:-2.11px;transform:scaleX(0.84);letter-spacing:1.19px;">し</span> 1</div>
<div class="abs" style="left:791px;top:71.4px;width:14.6px;height:20.6px;background:#f3f2f1;border:1px solid #e3e1df;"></div>
<svg style="left:795.6px;top:79.6px" width="5.4" height="3" viewBox="0 0 5.4 3"><path d="M0.3 2.8 L2.7 0.4 L5.1 2.8" fill="none" stroke="#c8c6c4" stroke-width="1.1"/></svg>
<div class="abs" style="left:791px;top:91.4px;width:14.6px;height:19.6px;background:#f3f2f1;border:1px solid #c8c6c4;"></div>
<svg style="left:795.6px;top:99.8px" width="5.4" height="3" viewBox="0 0 5.4 3"><path d="M0.3 0.3 L2.7 2.7 L5.1 0.3" fill="none" stroke="#3b3a39" stroke-width="1.1"/></svg>
<div class="abs" style="left:791px;top:110.4px;width:14.6px;height:20.2px;background:#f3f2f1;border:1px solid #c8c6c4;"></div>
<svg style="left:795.6px;top:117.4px" width="5.4" height="6.6" viewBox="0 0 5.4 6.6"><path d="M0 0.6 H5.4 M0.3 3.2 L2.7 5.6 L5.1 3.2" fill="none" stroke="#3b3a39" stroke-width="1.1"/></svg>
<div class="t" id="t62" style="left:662.55px;top:148.1px;font-size:12px;"><span class="k" style="margin-right:-6.94px;transform:scaleX(0.84);letter-spacing:-1.15px;">スタイル</span></div>
<svg style="left:805px;top:150.6px" width="8" height="7.5" viewBox="0 0 8 7.5"><path d="M0.6 5.6 V0.6 H5.8" fill="none" stroke="#484644" stroke-width="1.2"/><path d="M2.6 2.4 L7 6.8 M7.3 2.6 V7.1 H2.8" fill="none" stroke="#484644" stroke-width="1.2"/></svg>
<div class="abs" style="left:816.1px;top:69.3px;width:1px;height:88.4px;background:#c8c6c4;"></div>
<div class="abs" style="left:828.2px;top:69px;width:31.6px;height:30.6px;background:#fff;border:1px solid #e1dfdd;"></div>
<svg style="left:837px;top:75.6px" width="16" height="16" viewBox="0 0 16 16"><circle cx="10" cy="6" r="5.2" fill="none" stroke="#3b3a39" stroke-width="1.2"/><path d="M6.2 9.8 L0.5 15.5" stroke="#3b3a39" stroke-width="1.3"/></svg>
<div class="t" id="t63" style="left:831.65px;top:106.2px;font-size:12px;color:#323130;letter-spacing:0.55px;">編集</div>
<svg style="left:842.5px;top:125px" width="5.6" height="3.8" viewBox="0 0 5.6 3.8"><path d="M0.3 0.3 L2.8 2.8 L5.3 0.3" fill="none" stroke="#444" stroke-width="1.1"/></svg>
<div class="abs" style="left:870.3px;top:69.3px;width:1px;height:88.4px;background:#c8c6c4;"></div>
<svg style="left:893px;top:71.4px" width="20" height="31" viewBox="0 0 20 31"><rect x="4.4" y="0.7" width="11.4" height="21.4" rx="5.7" fill="#83bdeb" stroke="#1e74c8" stroke-width="1.3"/><path d="M0.8 16 C0.8 28 19.2 28 19.2 16 M10 25.2 V30.2" fill="none" stroke="#3b3a39" stroke-width="1.2"/></svg>
<div class="t" id="t64" style="left:889.85px;top:108.6px;font-size:12px;color:#323130;"><span class="k" style="margin-right:-5.04px;transform:scaleX(0.84);letter-spacing:-1.49px;">ディク</span></div>
<div class="t" id="t65" style="left:880px;top:122.8px;font-size:12px;color:#323130;"><span class="k" style="margin-right:-8.48px;transform:scaleX(0.84);letter-spacing:-1.4px;">テーション</span></div>
<div class="t" id="t66" style="left:891.15px;top:148.1px;font-size:12px;letter-spacing:0.6px;">音声</div>
<div class="abs" style="left:935.4px;top:69.3px;width:1px;height:88.4px;background:#c8c6c4;"></div>
<svg style="left:949px;top:71px" width="32" height="32" viewBox="0 0 32 32"><path d="M19.6 11.4 H29 M14 18.2 H23.6 M8.6 25 H18.6" stroke="#185abd" stroke-width="4.6" stroke-linecap="round"/><path d="M20.4 1 L24.6 3.8 L6.6 27.6 L1.2 30.6 L2.4 24.6 Z" fill="#f3f2f1" stroke="#185abd" stroke-width="1.4" stroke-linejoin="round"/><path d="M20.4 1 L24.6 3.8 L22.8 6.2 L18.6 3.4 Z" fill="#185abd"/><path d="M1.2 30.6 L1.9 27 L4.4 28.8 Z" fill="#185abd"/></svg>
<div class="t" id="t67" style="left:951.55px;top:108.6px;font-size:12px;color:#323130;"><span class="k" style="margin-right:-5.45px;transform:scaleX(0.84);letter-spacing:-0.65px;">エディ</span></div>
<div class="t" id="t68" style="left:955.3px;top:122.8px;font-size:12px;color:#323130;"><span class="k" style="margin-right:-3.32px;transform:scaleX(0.84);letter-spacing:-1.61px;">ター</span></div>
<div class="t" id="t69" style="left:942.75px;top:148.1px;font-size:12px;"><span class="k" style="margin-right:-8.14px;transform:scaleX(0.84);letter-spacing:-1.82px;">エディター</span></div>
<div class="abs" style="left:993.5px;top:69px;width:1px;height:88.6px;background:#c8c6c4;"></div>
<svg style="left:1003.7px;top:153px" width="9.4" height="5" viewBox="0 0 9.4 5"><path d="M0.4 4.8 L4.7 0.5 L9 4.8" fill="none" stroke="#3b3a39" stroke-width="1.2"/></svg>
<svg style="left:980px;top:580px" width="26" height="42" viewBox="0 0 26 42"><path d="M0 1 H15.4 V12 L24.6 21 L15.4 30.6 V41 H0" fill="#fff" stroke="#2b579a" stroke-width="1.2"/></svg>
<div class="abs" style="left:754px;top:171px;width:231.4px;height:518.5px;background:#e6e6e6;border:1px solid #c6c6c6;"></div>
<div class="abs" style="left:754px;top:689.5px;width:224px;height:2.5px;background:#f0f0f0;"></div>
<div class="t" id="t70" style="left:766.25px;top:186.4px;font-size:20px;color:#24508f;"><span class="k" style="margin-right:-12.37px;transform:scaleX(0.84);letter-spacing:-0.67px;">スタイル</span></div>
<svg style="left:914.8px;top:192px" width="9.2" height="5" viewBox="0 0 9.2 5"><path d="M0 0 H9.2 L4.6 5 Z" fill="#605e5c"/></svg>
<svg style="left:956px;top:189.6px" width="10" height="9.6" viewBox="0 0 10 9.6"><path d="M0.6 0.6 L9.4 9 M9.4 0.6 L0.6 9" stroke="#605e5c" stroke-width="1.8"/></svg>
<div class="abs" style="left:768px;top:218px;width:203px;height:382px;background:#fff;"></div>
<div class="t" id="t71" style="left:775.3px;top:241.4px;font-size:14px;color:#6a6a6a;font-family:'Liberation Serif','Noto Serif CJK JP','Noto Serif CJK SC',serif;letter-spacing:0.45px;">参照</div>
<div class="t" id="t72" style="left:921px;top:238.6px;font-size:15px;color:#000080;font-weight:700;">a</div>
<div class="t" id="t73" style="left:775.3px;top:278.2px;font-size:14px;color:#4f81bd;font-weight:700;font-family:'Liberation Serif','Noto Serif CJK JP','Noto Serif CJK SC',serif;letter-spacing:1.17px;">参照 2</div>
<div class="t" id="t74" style="left:921px;top:275.6px;font-size:15px;color:#000080;font-weight:700;">a</div>
<div class="t" id="t75" style="left:775.1px;top:316.6px;font-size:14px;color:#404040;font-family:'Liberation Serif','Noto Serif CJK JP','Noto Serif CJK SC',serif;font-style:italic;letter-spacing:0.45px;">斜体</div>
<div class="t" id="t76" style="left:921px;top:312.6px;font-size:15px;color:#000080;font-weight:700;">a</div>
<div class="t" id="t77" style="left:775.5px;top:353.6px;font-size:14px;color:#000;font-weight:700;font-family:'Liberation Serif','Noto Serif CJK JP','Noto Serif CJK SC',serif;font-style:italic;letter-spacing:1.8px;">書名</div>
<div class="t" id="t78" style="left:921px;top:349.6px;font-size:15px;color:#000080;font-weight:700;">a</div>
<div class="abs" style="left:775.6px;top:388.6px;width:126.6px;height:14.1px;background:#e1dfdd;"></div>
<div class="t" id="t79" style="left:775.5px;top:388.8px;font-size:14px;color:#605e5c;font-family:'Liberation Serif','Noto Serif CJK JP','Noto Serif CJK SC',serif;letter-spacing:0.26px;">未解決のメンション</div>
<div class="t" id="t80" style="left:921px;top:386.6px;font-size:15px;color:#000080;font-weight:700;">a</div>
<div class="t" id="t81" style="left:775.1px;top:426px;font-size:14px;color:#000;font-family:'Liberation Serif','Noto Serif CJK JP','Noto Serif CJK SC',serif;letter-spacing:0.47px;">フッター</div>
<svg style="left:916.9px;top:428.1px" width="6" height="8" viewBox="0 0 6 8"><path d="M5.3 0 V4.5 H1.2" fill="none" stroke="#000080" stroke-width="1"/><path d="M0 4.5 L2.9 1.9 V7.1 Z" fill="#000080"/><path d="M1 4.5 H5.3" stroke="#000080" stroke-width="1.5"/></svg>
<div class="t" id="t82" style="left:923.65px;top:424.7px;font-size:12.6px;color:#000080;font-weight:700;transform:scaleX(.76);transform-origin:0 0;">a</div>
<div class="abs" style="left:916.9px;top:435.9px;width:12.2px;height:2.1px;background:#000080;"></div>
<div class="t" id="t83" style="left:775.55px;top:462.5px;font-size:14px;color:#000;font-family:'Liberation Serif','Noto Serif CJK JP','Noto Serif CJK SC',serif;letter-spacing:-0.02px;">ヘッダー</div>
<svg style="left:916.9px;top:465.1px" width="6" height="8" viewBox="0 0 6 8"><path d="M5.3 0 V4.5 H1.2" fill="none" stroke="#000080" stroke-width="1"/><path d="M0 4.5 L2.9 1.9 V7.1 Z" fill="#000080"/><path d="M1 4.5 H5.3" stroke="#000080" stroke-width="1.5"/></svg>
<div class="t" id="t84" style="left:923.65px;top:461.7px;font-size:12.6px;color:#000080;font-weight:700;transform:scaleX(.76);transform-origin:0 0;">a</div>
<div class="abs" style="left:916.9px;top:472.9px;width:12.2px;height:2.1px;background:#000080;"></div>
<div class="t" id="t85" style="left:835.7px;top:501.6px;font-size:14px;color:#404040;font-family:'Liberation Serif','Noto Serif CJK JP','Noto Serif CJK SC',serif;font-style:italic;letter-spacing:-0.75px;">引用文</div>
<svg style="left:916.9px;top:502.1px" width="6" height="8" viewBox="0 0 6 8"><path d="M5.3 0 V4.5 H1.2" fill="none" stroke="#000080" stroke-width="1"/><path d="M0 4.5 L2.9 1.9 V7.1 Z" fill="#000080"/><path d="M1 4.5 H5.3" stroke="#000080" stroke-width="1.5"/></svg>
<div class="t" id="t86" style="left:923.65px;top:498.7px;font-size:12.6px;color:#000080;font-weight:700;transform:scaleX(.76);transform-origin:0 0;">a</div>
<div class="abs" style="left:916.9px;top:509.9px;width:12.2px;height:2.1px;background:#000080;"></div>
<div class="abs" style="left:798.6px;top:535.8px;width:115.2px;height:1.1px;background:#4f81bd;"></div>
<div class="abs" style="left:798.6px;top:550.9px;width:115.2px;height:1.1px;background:#4f81bd;"></div>
<div class="t" id="t87" style="left:829.6px;top:537.3px;font-size:14px;color:#4f81bd;font-family:'Liberation Serif','Noto Serif CJK JP','Noto Serif CJK SC',serif;font-style:italic;letter-spacing:0.66px;">引用文 2</div>
<svg style="left:916.9px;top:539.1px" width="6" height="8" viewBox="0 0 6 8"><path d="M5.3 0 V4.5 H1.2" fill="none" stroke="#000080" stroke-width="1"/><path d="M0 4.5 L2.9 1.9 V7.1 Z" fill="#000080"/><path d="M1 4.5 H5.3" stroke="#000080" stroke-width="1.5"/></svg>
<div class="t" id="t88" style="left:923.65px;top:535.7px;font-size:12.6px;color:#000080;font-weight:700;transform:scaleX(.76);transform-origin:0 0;">a</div>
<div class="abs" style="left:916.9px;top:546.9px;width:12.2px;height:2.1px;background:#000080;"></div>
<div class="abs" style="left:768px;top:563px;width:164.4px;height:37px;background:#fff;border:2px solid #2b579a;"></div>
<div class="t" id="t89" style="left:775.65px;top:573px;font-size:16px;color:#000;font-weight:300;font-family:'Liberation Sans','Noto Sans CJK JP','IPAGothic',sans-serif;letter-spacing:-0.04px;">見出し 1</div>
<svg style="left:916.9px;top:576.1px" width="6" height="8" viewBox="0 0 6 8"><path d="M5.3 0 V4.5 H1.2" fill="none" stroke="#000080" stroke-width="1"/><path d="M0 4.5 L2.9 1.9 V7.1 Z" fill="#000080"/><path d="M1 4.5 H5.3" stroke="#000080" stroke-width="1.5"/></svg>
<div class="t" id="t90" style="left:923.65px;top:572.7px;font-size:12.6px;color:#000080;font-weight:700;transform:scaleX(.76);transform-origin:0 0;">a</div>
<div class="abs" style="left:916.9px;top:583.9px;width:12.2px;height:2.1px;background:#000080;"></div>
<div class="abs" style="left:768.5px;top:606.2px;width:12.4px;height:12px;background:#fdfdfd;border:1px solid #8a8886;"></div>
<svg style="left:770.6px;top:609px" width="8.4" height="6.6" viewBox="0 0 8.4 6.6"><path d="M0.6 3.2 L3 5.8 L7.8 0.6" fill="none" stroke="#605e5c" stroke-width="1.2"/></svg>
<div class="t" id="t91" style="left:785.75px;top:606.7px;font-size:12px;color:#323130;"><span class="k" style="margin-right:-10.26px;transform:scaleX(0.84);letter-spacing:-1.31px;">プレビューを</span>表示<span class="k" style="margin-right:-3.42px;transform:scaleX(0.84);letter-spacing:-1.31px;">する</span></div>
<div class="abs" style="left:768.5px;top:628.7px;width:12.4px;height:12px;background:#fdfdfd;border:1px solid #8a8886;"></div>
<div class="t" id="t92" style="left:784.75px;top:629px;font-size:12px;color:#323130;"><span class="k" style="margin-right:-18.97px;transform:scaleX(0.84);letter-spacing:-1.22px;">リンクされたスタイルを</span>使用不可<span class="k" style="margin-right:-5.17px;transform:scaleX(0.84);letter-spacing:-1.22px;">にする</span></div>
<div class="abs" style="left:768.5px;top:651px;width:23.4px;height:23px;background:#fdfdfd;border:1px solid #adadad;"></div>
<div class="abs" style="left:801.4px;top:651px;width:23.4px;height:23px;background:#fdfdfd;border:1px solid #adadad;"></div>
<div class="abs" style="left:834.2px;top:651px;width:23.4px;height:23px;background:#fdfdfd;border:1px solid #adadad;"></div>
<div class="t" id="t93" style="left:772px;top:653.1px;font-size:17px;color:#3b3a39;">A</div>
<svg style="left:782.4px;top:665.6px" width="5.6" height="5.6" viewBox="0 0 5.6 5.6"><path d="M2.8 0 V5.6 M0 2.8 H5.6" stroke="#2ca04a" stroke-width="1.1"/></svg>
<div class="t" id="t94" style="left:804.2px;top:653.4px;font-size:16px;color:#3b3a39;">A</div>
<svg style="left:813.4px;top:661.6px" width="8.6" height="9" viewBox="0 0 8.6 9"><circle cx="3.4" cy="3.4" r="2.8" fill="none" stroke="#1e74c8" stroke-width="1.2"/><path d="M5.4 5.6 L8.2 8.6" stroke="#1e74c8" stroke-width="1.3"/></svg>
<div class="t" id="t95" style="left:837px;top:653.4px;font-size:16px;color:#3b3a39;">A</div>
<svg style="left:846px;top:663px" width="8.8" height="7.4" viewBox="0 0 8.8 7.4"><path d="M0.5 4 L3.2 6.8 L8.4 0.5" fill="none" stroke="#2ca04a" stroke-width="1.2"/></svg>
<div class="abs" style="left:867px;top:651px;width:72.4px;height:23px;background:#fdfdfd;border:1px solid #adadad;"></div>
<div class="t" id="t96" style="left:874.6px;top:656.4px;font-size:12px;color:#323130;"><span class="k" style="margin-right:-8.1px;transform:scaleX(0.84);letter-spacing:-1.87px;">オプション</span></div>
<div class="t" id="t97" style="left:918.3px;top:656.4px;font-size:12px;color:#323130;letter-spacing:1.3px;">...</div>
<div class="abs" style="left:1006px;top:165px;width:15px;height:524.5px;background:#dadada;"></div>
<div class="abs" style="left:1006px;top:165px;width:15px;height:14.6px;background:#fff;border:1px solid #ababab;"></div>
<svg style="left:1010px;top:169.6px" width="7" height="4.4" viewBox="0 0 7 4.4"><path d="M0 4.4 L3.5 0.4 L7 4.4 Z" fill="#606060"/></svg>
<div class="abs" style="left:1006px;top:181px;width:15px;height:93.6px;background:#fff;border:1px solid #ababab;"></div>
<div class="abs" style="left:1006px;top:675px;width:15px;height:14.5px;background:#fff;border:1px solid #ababab;"></div>
<svg style="left:1010px;top:680.4px" width="7" height="4.4" viewBox="0 0 7 4.4"><path d="M0 0 L3.5 4 L7 0 Z" fill="#606060"/></svg>
<div class="abs" style="left:1px;top:692px;width:1021px;height:22px;background:#f3f2f1;"></div>
<div class="abs" style="left:1px;top:692px;width:1021px;height:1px;background:#d2d2d2;"></div>
<div class="t" id="t98" style="left:8.3px;top:696.8px;font-size:12px;">1/2 <span class="k" style="margin-right:-6.89px;transform:scaleX(0.84);letter-spacing:2.35px;">ページ</span></div>
<div class="t" id="t99" style="left:77.75px;top:696.8px;font-size:12px;letter-spacing:1.07px;">行: 1</div>
<div class="t" id="t100" style="left:124.6px;top:696.8px;font-size:12px;letter-spacing:0.48px;">1305 単語</div>
<svg style="left:200.4px;top:697px" width="14.4" height="12.4" viewBox="0 0 14.4 12.4"><path d="M6.2 11 H0.6 V0.8 H6.2 V11 M6.2 0.8 H11.8 V5" fill="none" stroke="#444" stroke-width="1.2"/><path d="M7.4 5.6 L13.6 12 M13.6 5.6 L7.4 12" stroke="#444" stroke-width="1.2"/></svg>
<div class="t" id="t101" style="left:229.6px;top:696.8px;font-size:12px;letter-spacing:0.7px;">日本語</div>
<svg style="left:287.5px;top:697px" width="14.6" height="12.6" viewBox="0 0 14.6 12.6"><path d="M0.6 11.4 V0.7 H13 V4.4 M0.6 2.9 H13 M2.6 5.4 H6 M2.6 7.8 H5" fill="none" stroke="#444" stroke-width="1.2"/><circle cx="9.3" cy="8.2" r="3.7" fill="#f3f2f1" stroke="#444" stroke-width="1.2"/><circle cx="9.3" cy="8.2" r="1.8" fill="#444"/></svg>
<svg style="left:631.8px;top:696.6px" width="14" height="12.6" viewBox="0 0 14 12.6"><path d="M0.6 3.2 V0.6 H3.2 M10.8 0.6 H13.4 V3.2 M13.4 9.4 V12 H10.8 M3.2 12 H0.6 V9.4" fill="none" stroke="#444" stroke-width="1.1"/><path d="M4.4 2.8 H7.8 L9.8 4.8 V9.8 H4.4 Z M7.6 2.8 V5 H9.8" fill="none" stroke="#444" stroke-width="1"/></svg>
<div class="t" id="t102" style="left:648px;top:696.8px;font-size:12px;"><span class="k" style="margin-right:-8.59px;transform:scaleX(0.84);letter-spacing:-1.26px;">フォーカス</span></div>
<svg style="left:717.7px;top:696.8px" width="13.6" height="11.6" viewBox="0 0 13.6 11.6"><path d="M6.8 1.6 C5 0.4 2.4 0.4 0.6 1.2 V10.4 C2.4 9.6 5 9.6 6.8 10.8 C8.6 9.6 11.2 9.6 13 10.4 V1.2 C11.2 0.4 8.6 0.4 6.8 1.6 V10.8" fill="none" stroke="#444" stroke-width="1.1"/><path d="M2.4 3.4 H5 M2.4 5.4 H5 M2.4 7.4 H5 M8.6 3.4 H11.2 M8.6 5.4 H11.2 M8.6 7.4 H11.2" stroke="#444" stroke-width="0.9"/></svg>
<div class="abs" style="left:745.3px;top:693px;width:39.4px;height:21px;background:#c8c8c8;"></div>
<svg style="left:760px;top:696.4px" width="10.6" height="13" viewBox="0 0 10.6 13"><path d="M0.6 0.6 H10 V12.4 H0.6 Z" fill="none" stroke="#333" stroke-width="1.1"/><path d="M2.4 3 H8.2 M2.4 5.2 H8.2 M2.4 7.4 H8.2 M2.4 9.6 H8.2" stroke="#333" stroke-width="1"/></svg>
<svg style="left:798px;top:696.4px" width="15" height="13" viewBox="0 0 15 13"><path d="M5.4 11.6 H0.6 V0.6 H11.4 V4.4 M0.6 2.8 H11.4 M2.4 5 H7 M2.4 7.2 H5.6 M2.4 9.4 H5" fill="none" stroke="#444" stroke-width="1.1"/><circle cx="10.2" cy="9" r="4" fill="#4a4a4a"/><path d="M6.4 9 H14 M10.2 5.2 V12.8" stroke="#e8e8e8" stroke-width="0.9"/><ellipse cx="10.2" cy="9" rx="1.9" ry="3.8" fill="none" stroke="#e8e8e8" stroke-width="0.7"/></svg>
<div class="abs" style="left:831px;top:703px;width:7px;height:1.1px;background:#444;"></div>
<div class="abs" style="left:844.6px;top:703.2px;width:99.4px;height:1px;background:#8a8886;"></div>
<div class="abs" style="left:894.8px;top:697.6px;width:4.2px;height:11.2px;background:#444;"></div>
<div class="abs" style="left:949px;top:703px;width:8px;height:1.1px;background:#444;"></div>
<div class="abs" style="left:952.5px;top:699.5px;width:1.1px;height:8px;background:#444;"></div>
<div class="t" id="t103" style="left:969.7px;top:696.8px;font-size:12px;letter-spacing:0.75px;">120%</div>
</body>
</html>
